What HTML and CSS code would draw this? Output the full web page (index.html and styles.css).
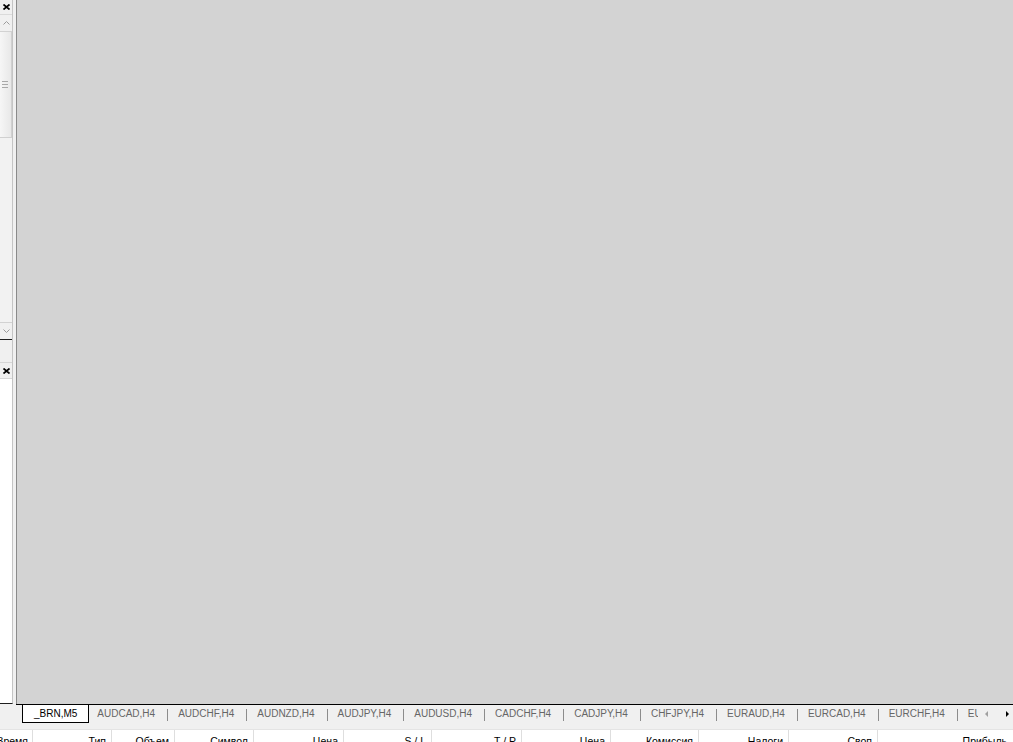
FILE: index.html
```html
<!DOCTYPE html>
<html lang="ru">
<head>
    <meta charset="UTF-8">
    <title>Terminal</title>
    <link rel="stylesheet" href="styles.css">
</head>
<body>
<div class="app">
    <div class="main">
        <!-- left dock: market watch + navigator -->
        <aside class="dock">
            <div class="dock-col">
                <div class="pane-head">
                    <svg class="close" width="7" height="6" viewBox="0 0 7 6"><path d="M0.5 0.5L6.5 5.5M6.5 0.5L0.5 5.5" stroke="#000" stroke-width="1.7"/></svg>
                </div>
                <div class="scrollbar">
                    <div class="sb-btn">
                        <svg width="7" height="4" viewBox="0 0 7 4"><path d="M0.5 3.5L3.5 0.5L6.5 3.5" fill="none" stroke="#9a9a9a"/></svg>
                    </div>
                    <div class="sb-thumb">
                        <span class="grip"></span>
                    </div>
                    <div class="sb-track"></div>
                    <div class="sb-btn down">
                        <svg width="7" height="4" viewBox="0 0 7 4"><path d="M0.5 0.5L3.5 3.5L6.5 0.5" fill="none" stroke="#9a9a9a"/></svg>
                    </div>
                </div>
                <div class="dock-gap"></div>
                <div class="pane-head second">
                    <svg class="close" width="7" height="6" viewBox="0 0 7 6"><path d="M0.5 0.5L6.5 5.5M6.5 0.5L0.5 5.5" stroke="#000" stroke-width="1.7"/></svg>
                </div>
                <div class="pane-body"></div>
            </div>
        </aside>
        <div class="mdi"></div>
    </div>

    <!-- chart window tabs -->
    <div class="tabbar">
        <div class="tabs">
            <span class="tab-lead"></span>
            <span class="tab active">_BRN,M5</span>
            <span class="tab">AUDCAD,H4</span><i class="sep"></i>
            <span class="tab">AUDCHF,H4</span><i class="sep"></i>
            <span class="tab">AUDNZD,H4</span><i class="sep"></i>
            <span class="tab">AUDJPY,H4</span><i class="sep"></i>
            <span class="tab">AUDUSD,H4</span><i class="sep"></i>
            <span class="tab">CADCHF,H4</span><i class="sep"></i>
            <span class="tab">CADJPY,H4</span><i class="sep"></i>
            <span class="tab">CHFJPY,H4</span><i class="sep"></i>
            <span class="tab">EURAUD,H4</span><i class="sep"></i>
            <span class="tab">EURCAD,H4</span><i class="sep"></i>
            <span class="tab">EURCHF,H4</span><i class="sep"></i>
            <span class="tab">EURJPY,H4</span><i class="sep"></i>
            <span class="tab">EURNZD,H4</span>
        </div>
        <div class="tab-scroll">
            <span class="arrow left"></span>
            <span class="arrow right"></span>
        </div>
    </div>

    <!-- terminal: trade table header -->
    <div class="term-head">
        <span class="col c1">Время</span>
        <span class="col c2">Тип</span>
        <span class="col c3">Объем</span>
        <span class="col c4">Символ</span>
        <span class="col c5">Цена</span>
        <span class="col c6">S / L</span>
        <span class="col c7">T / P</span>
        <span class="col c8">Цена</span>
        <span class="col c9">Комиссия</span>
        <span class="col c10">Налоги</span>
        <span class="col c11">Своп</span>
        <span class="col c12">Прибыль</span>
    </div>
</div>
</body>
</html>
```

FILE: styles.css
```css
body {
    margin: 0;
    font-family: "Liberation Sans", Arial, sans-serif;
    font-size: 10.5px;
    background-color: #f0f0f0;
    overflow: hidden;
}
.app {
    width: 1013px;
    height: 742px;
    display: flex;
    flex-direction: column;
    overflow: hidden;
}
.main {
    display: flex;
    height: 704px;
    flex-shrink: 0;
}

/* Left dock */
.dock {
    width: 16px;
    flex-shrink: 0;
    background-color: #f0f0f0;
}
.dock-col {
    width: 12px;
    height: 703px;
    display: flex;
    flex-direction: column;
    border-right: 1px solid #c4c4c4;
    border-bottom: 1px solid #1e1e1e;
}
.pane-head {
    height: 14px;
    flex-shrink: 0;
    display: flex;
    align-items: center;
    padding-left: 3px;
}
.pane-head.second {
    height: 15px;
    border-top: 1px solid #d6d6d6;
    border-bottom: 1px solid #d6d6d6;
}
.scrollbar {
    height: 324px;
    flex-shrink: 0;
    display: flex;
    flex-direction: column;
    border-top: 1px solid #dadada;
    border-bottom: 1px solid #1e1e1e;
    background-color: #f3f3f3;
}
.sb-btn {
    height: 16px;
    flex-shrink: 0;
    display: flex;
    align-items: center;
    justify-content: center;
    background-color: #f0f0f0;
    border-bottom: 1px solid #d2d2d2;
}
.sb-btn.down {
    border-bottom: 0;
    border-top: 1px solid #d2d2d2;
}
.sb-thumb {
    height: 105px;
    flex-shrink: 0;
    display: flex;
    align-items: center;
    padding-left: 2px;
    background: linear-gradient(to right, #f6f6f6, #e8e8e8);
    border-bottom: 1px solid #d0d0d0;
    border-right: 1px solid #d0d0d0;
}
.grip {
    width: 6px;
    height: 7px;
    background: repeating-linear-gradient(to bottom, #a8a8a8 0, #a8a8a8 1px, transparent 1px, transparent 3px);
}
.sb-track {
    flex: 1;
    background-color: #f2f2f2;
}
.dock-gap {
    height: 22px;
    flex-shrink: 0;
}
.pane-body {
    flex: 1;
    background-color: #fff;
}

/* MDI client area */
.mdi {
    flex: 1;
    background-color: #d3d3d3;
    border-left: 1px solid #8a8a8a;
}

/* Chart tabs */
.tabbar {
    display: flex;
    height: 19px;
    flex-shrink: 0;
    padding-left: 16px;
}
.tabs {
    flex: 1;
    display: flex;
    overflow: hidden;
    border-top: 1px solid #000;
    font-size: 10px;
}
.tab-lead {
    width: 6px;
    flex-shrink: 0;
}
.tab {
    flex-shrink: 0;
    display: flex;
    align-items: center;
    padding: 0 12px 0 10px;
    height: 17px;
    color: #666;
    white-space: nowrap;
}
.tab.active {
    margin-top: -1px;
    height: 17px;
    padding: 1px 11px 0 11px;
    color: #000;
    background-color: #fff;
    border: 1px solid #000;
    border-top: 0;
}
.tab.active + .tab {
    padding-left: 8px;
}
.sep {
    width: 1px;
    height: 12px;
    margin-top: 4px;
    flex-shrink: 0;
    background-color: #8c8c8c;
}
.tab-scroll {
    width: 35px;
    flex-shrink: 0;
    display: flex;
    align-items: center;
    border-top: 1px solid #000;
    padding-left: 7px;
    box-sizing: border-box;
}
.arrow {
    width: 0;
    height: 0;
    border-top: 3px solid transparent;
    border-bottom: 3px solid transparent;
}
.arrow.left {
    border-right: 3px solid #a0a0a0;
}
.arrow.right {
    margin-left: 18px;
    border-left: 3px solid #000;
}

/* Terminal table header */
.term-head {
    display: flex;
    margin-top: 6px;
    height: 18px;
    flex-shrink: 0;
    background-color: #fff;
    border-top: 1px solid #e4e4e4;
}
.col {
    display: flex;
    justify-content: flex-end;
    padding: 5px 5px 0 0;
    overflow: hidden;
    white-space: nowrap;
    color: #000;
    border-right: 1px solid #dedede;
    box-sizing: border-box;
    flex-shrink: 0;
}
.c1 { width: 33px; padding-right: 4px; }
.c2 { width: 79px; }
.c3 { width: 63px; }
.c4 { width: 79px; }
.c5 { width: 90px; }
.c6 { width: 88px; }
.c7 { width: 90px; }
.c8 { width: 89px; }
.c9 { width: 88px; }
.c10 { width: 90px; }
.c11 { width: 89px; }
.c12 { width: 136px; border-right: 0; padding-right: 7px; }
```
